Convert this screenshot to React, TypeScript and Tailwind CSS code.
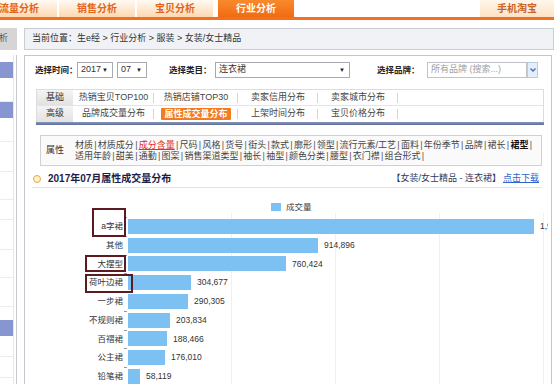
import React from "react";

const bars = [
  { name: "a字裙", value: 1951367 },
  { name: "其他", value: 914896 },
  { name: "大摆型", value: 760424 },
  { name: "荷叶边裙", value: 304677 },
  { name: "一步裙", value: 290305 },
  { name: "不规则裙", value: 203834 },
  { name: "百褶裙", value: 188466 },
  { name: "公主裙", value: 176010 },
  { name: "铅笔裙", value: 58119 },
];

const attrLine1 = ["材质", "材质成分", "成分含量", "尺码", "风格", "货号", "街头", "款式", "廓形", "领型", "流行元素/工艺", "面料", "年份季节", "品牌", "裙长", "裙型"];
const attrLine2 = ["适用年龄", "甜美", "通勤", "图案", "销售渠道类型", "袖长", "袖型", "颜色分类", "腰型", "衣门襟", "组合形式"];

const Tab = ({ children, className }: { children: React.ReactNode; className: string }) => (
  <div className={`flex items-center justify-center text-[10px] font-bold whitespace-nowrap ${className}`}>{children}</div>
);

const Select = ({ text, className }: { text: string; className: string }) => (
  <div className={`h-[16px] border border-[#a7abb0] bg-white flex items-center justify-between pl-[3px] pr-[4px] text-[9px] text-[#333] ${className}`}>
    <span>{text}</span>
    <span className="text-[6px] text-[#222]">▼</span>
  </div>
);

const Sep = () => <span className="mx-[1.25px] text-[#555]">|</span>;

const AttrLine = ({ items }: { items: string[] }) => (
  <div className="h-[11px] leading-[11px] whitespace-nowrap">
    {items.map((it) => (
      <React.Fragment key={it}>
        <span
          className={
            it === "成分含量"
              ? "text-[#e0302a] underline"
              : it === "裙型"
              ? "font-bold text-[#111]"
              : "text-[#444]"
          }
        >
          {it}
        </span>
        <Sep />
      </React.Fragment>
    ))}
  </div>
);

export default function App() {
  const scale = 0.000208;
  const rows1 = ["热销宝贝TOP100", "热销店铺TOP30", "卖家信用分布", "卖家城市分布"];
  const rows2 = ["品牌成交量分布", "属性成交量分布", "上架时间分布", "宝贝价格分布"];
  const colW = ["w-[81px]", "w-[84px]", "w-[80px]", "w-[80px]"];
  const sideRows = [24, 30, 28, 20, 30, 28, 29];

  return (
    <div className="w-[554px] h-[384px] overflow-hidden bg-white font-[family-name:'Liberation_Sans','Noto_Sans_CJK_SC',sans-serif] text-[#333]">
      {/* top tabs */}
      <div className="flex h-[20px] border-b-[3px] border-[#f37021]">
        <Tab className="ml-[-19px] w-[76px] bg-linear-to-b from-[#fffaf2] to-[#fbd9b2] text-[#e2641b]">流量分析</Tab>
        <Tab className="ml-[2px] w-[76px] bg-linear-to-b from-[#fffaf2] to-[#fbd9b2] text-[#e2641b]">销售分析</Tab>
        <Tab className="ml-[2px] w-[76px] bg-linear-to-b from-[#fffaf2] to-[#fbd9b2] text-[#e2641b]">宝贝分析</Tab>
        <Tab className="ml-[5px] w-[76px] bg-linear-to-b from-[#f98a2c] to-[#f26a12] text-white">行业分析</Tab>
        <div className="flex-1" />
        <Tab className="w-[74px] bg-linear-to-b from-[#fff6ea] to-[#fce3c6] text-[#c9631f]">手机淘宝</Tab>
      </div>

      <div className="flex pt-[8px]">
        {/* left side menu (cut off) */}
        <div className="w-[17px] shrink-0">
          <div className="h-[22px] bg-[#d5d5d5] flex items-center justify-end pr-[9px] overflow-hidden whitespace-nowrap text-[9px] text-[#555]">
            分析
          </div>
          <div className="mt-[5px] h-[340px] border-r border-[#c8c8c8]">
            <div className="w-[14px] h-full border-r border-[#e6e6e6] pt-[7px]">
              <div className="h-[16px] w-[13px] bg-[#8795d1]" />
              <div className="h-[24px] border-b border-[#ececec]" />
              <div className="h-[16px] w-[13px] bg-[#8795d1]" />
              {sideRows.map((h, i) => (
                <div key={i} className="border-b border-[#ececec]" style={{ height: h }} />
              ))}
              <div className="h-[13px]" />
              <div className="h-[16px] w-[13px] bg-[#8795d1]" />
              <div className="h-[21px] border-b border-[#ececec]" />
              <div className="h-[21px] border-b border-[#ececec]" />
            </div>
          </div>
        </div>

        <div className="ml-[7px] shrink-0">
          {/* breadcrumb */}
          <div className="h-[22px] w-[530px] border border-[#c9ced6] bg-[#f0f2f6] pl-[7px] flex items-center text-[9px] text-[#333] whitespace-nowrap">
            当前位置：生e经 &gt; 行业分析 &gt; 服装 &gt; 女装/女士精品
          </div>

          {/* main box */}
          <div className="mt-[5px] w-[528px] h-[340px] border border-[#c3c6cc] bg-white overflow-hidden pt-[6px]">
            {/* filters */}
            <div className="flex items-center h-[16px] pl-[10px] whitespace-nowrap">
              <div className="w-[42px] text-[8.5px] font-bold text-[#222]">选择时间：</div>
              <Select text="2017" className="w-[36px]" />
              <Select text="07" className="ml-[4px] w-[30px]" />
              <div className="ml-[22px] w-[46px] text-[8.5px] font-bold text-[#222]">选择类目：</div>
              <Select text="连衣裙" className="w-[135px]" />
              <div className="ml-[27px] w-[50px] text-[8.5px] font-bold text-[#222]">选择品牌：</div>
              <div className="h-[16px] w-[100px] border border-[#bfc3c8] bg-white flex items-center pl-[3px] text-[9px] text-[#a0a0a0]">
                所有品牌 (搜索...)
              </div>
              <div className="h-[16px] w-[11px] border border-[#b9cbe0] bg-[#e3eefa] flex items-center justify-center">
                <svg width="6" height="4" viewBox="0 0 6 4">
                  <path d="M0.5 0.5 L3 3 L5.5 0.5" fill="none" stroke="#3a6fb5" strokeWidth="1.3" />
                </svg>
              </div>
            </div>

            {/* report type table */}
            <div className="ml-[11px] mt-[11px] w-[508px] text-[9px] whitespace-nowrap">
              <div className="border border-b-0 border-[#dcdcdc]">
                <div className="flex h-[16px] border-b border-[#e4e4e4]">
                  <div className="w-[36px] bg-linear-to-b from-[#f4f4f4] to-[#e2e2e2] flex items-center justify-center text-[#333]">基础</div>
                  {rows1.map((r, i) => (
                    <div key={r} className={`${colW[i]} flex items-center justify-center relative`}>
                      <span className="text-[#444]">{r}</span>
                      <span className="absolute right-0 top-[3px] h-[10px] w-px bg-[#d4d4d4]" />
                    </div>
                  ))}
                </div>
                <div className="flex h-[16px]">
                  <div className="w-[36px] bg-linear-to-b from-[#f4f4f4] to-[#e2e2e2] flex items-center justify-center text-[#333]">高级</div>
                  {rows2.map((r, i) => (
                    <div key={r} className={`${colW[i]} flex items-center justify-center relative`}>
                      {i === 1 ? (
                        <span className="bg-[#f47b20] text-white font-bold px-[3px] h-[12px] leading-[12px] rounded-[1px]">{r}</span>
                      ) : (
                        <span className="text-[#444]">{r}</span>
                      )}
                      <span className="absolute right-0 top-[3px] h-[10px] w-px bg-[#d4d4d4]" />
                    </div>
                  ))}
                </div>
              </div>
              <div className="h-[3px] bg-linear-to-b from-[#8a98bd] to-[#5d6d96]" />
            </div>

            {/* attributes */}
            <div className="ml-[15px] mt-[10px] w-[502px] h-[31px] border border-[#d0d0d0] bg-[#fafafa] flex items-center text-[9px]">
              <div className="w-[34px] pl-[5px] text-[#333]">属性</div>
              <div>
                <AttrLine items={attrLine1} />
                <AttrLine items={attrLine2} />
              </div>
            </div>

            {/* title */}
            <div className="ml-[7px] mt-[4px] w-[510px] h-[18px] border-b border-[#e2e2e2] flex items-center whitespace-nowrap">
              <div className="w-[8px] h-[8px] rounded-full border-[1.5px] border-[#eca53c] bg-[#fff2cf] ml-[1px]" />
              <div className="ml-[7px] text-[10px] font-bold text-[#1b1d4d]">2017年07月属性成交量分布</div>
              <div className="flex-1" />
              <div className="text-[9px] text-[#2c3a66]">【女装/女士精品 - 连衣裙】</div>
              <div className="ml-[2px] mr-[3px] text-[9px] text-[#2f64c8] underline">点击下载</div>
            </div>

            {/* chart */}
            <div className="relative w-[523px] overflow-hidden h-[200px]">
              <div className="flex items-center mt-[15px] ml-[246px] h-[8px]">
                <div className="w-[10px] h-[8px] bg-[#7dc1f2]" />
                <div className="ml-[5px] text-[8.5px] text-[#444]">成交量</div>
              </div>
              <div className="relative mt-[6px]">
                {[206, 310, 414, 518].map((x) => (
                  <div key={x} className="absolute top-[-4px] h-[200px] w-px bg-[#f0f0f0]" style={{ left: x }} />
                ))}
                {bars.map((b) => (
                  <div key={b.name} className="relative flex items-center h-[18.75px]">
                    <div className="w-[98px] shrink-0 text-right text-[8.5px] text-[#333] whitespace-nowrap">{b.name}</div>
                    <div className="w-[5px] shrink-0 self-stretch">
                      <div className="ml-[1px] w-[3px] h-px bg-[#999]" />
                    </div>
                    <div className="h-[15px] shrink-0 bg-[#7dc1f2]" style={{ width: Math.round(b.value * scale) }} />
                    <div className="ml-[6px] shrink-0 text-[8.5px] text-[#333] whitespace-nowrap">{b.value.toLocaleString("en-US")}</div>
                  </div>
                ))}
                <div className="absolute left-[67px] top-[-9px] w-[34px] h-[29px] border-2 border-[#5c1b21]" />
                <div className="absolute left-[60px] top-[38px] w-[41px] h-[17px] border-2 border-[#5c1b21]" />
                <div className="absolute left-[60px] top-[57px] w-[48px] h-[19px] border-2 border-[#5c1b21]" />
              </div>
            </div>
          </div>
        </div>
      </div>
    </div>
  );
}
